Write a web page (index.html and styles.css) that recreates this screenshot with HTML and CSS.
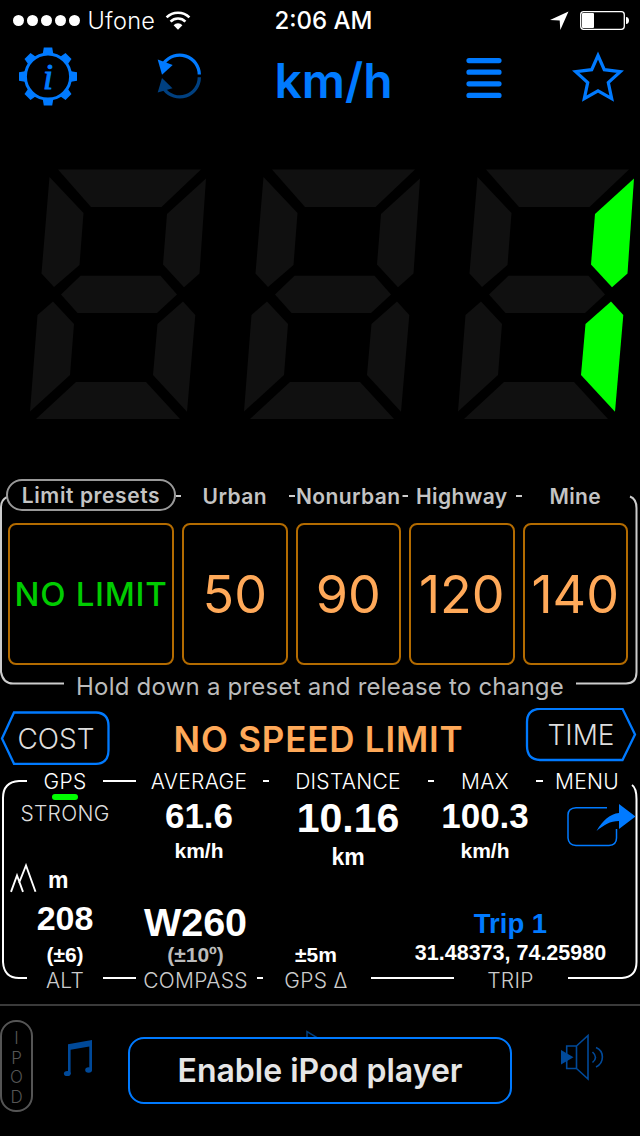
FILE: index.html
```
<!DOCTYPE html>
<html lang="en">
<head>
  <meta charset="UTF-8">
  <meta name="viewport" content="width=device-width, initial-scale=1.0">
  <title>Speedometer</title>
  <link rel="stylesheet" href="styles.css">
</head>
<body>
  <div class="status-bar">
    <div class="carrier">
      <span class="dot"></span><span class="dot"></span><span class="dot"></span><span class="dot"></span><span class="dot"></span>
      <span class="carrier-name">Ufone</span>
      <svg class="wifi" width="26" height="20" viewBox="0 0 26 20">
        <path d="M1.600 6.400a16.200 16.200 0 0 1 22.800 0M5.600 10.600a10.400 10.400 0 0 1 14.800 0" fill="none" stroke="#fff" stroke-width="2.600"/>
        <path d="M8.600 14.200a6.200 6.200 0 0 1 8.800 0L13 18.800z" fill="#fff"/>
      </svg>
    </div>
    <div class="clock">2:06 AM</div>
    <div class="status-right">
      <svg width="20" height="20" viewBox="549 11 20 20"><path d="M568.500 11.500L550 20l9.700.600.600 9.400z" fill="#fff"/></svg>
      <svg width="50" height="20" viewBox="580 11 50 20">
        <rect x="580.700" y="11.700" width="43.600" height="17.600" rx="3" fill="none" stroke="#fff" stroke-width="1.300"/>
        <rect x="582" y="13" width="12" height="15" rx="1" fill="#fff"/>
        <path d="M626 17c4 0 4 7 0 7z" fill="#fff"/>
      </svg>
    </div>
  </div>

  <div class="toolbar">
    <svg width="60" height="79" viewBox="-30 -35.500 60 79">
      <circle r="22.600" fill="none" stroke="#007aff" stroke-width="3"/>
      <g id="teeth" fill="#007aff">
        <path d="M-4.200-29h8.400l1 6h-10.400z"/>
        <path d="M-4.200-29h8.400l1 6h-10.400z" transform="rotate(45)"/>
        <path d="M-4.200-29h8.400l1 6h-10.400z" transform="rotate(90)"/>
        <path d="M-4.200-29h8.400l1 6h-10.400z" transform="rotate(135)"/>
        <path d="M-4.200-29h8.400l1 6h-10.400z" transform="rotate(180)"/>
        <path d="M-4.200-29h8.400l1 6h-10.400z" transform="rotate(225)"/>
        <path d="M-4.200-29h8.400l1 6h-10.400z" transform="rotate(270)"/>
        <path d="M-4.200-29h8.400l1 6h-10.400z" transform="rotate(315)"/>
      </g>
      <text class="info-i" x="0" y="12.500">i</text>
    </svg>
    <svg width="48" height="79" viewBox="155 41 48 79">
      <path d="M164 63a19.600 19.600 0 0 1 35.300 11.500" fill="none" stroke="#007aff" stroke-width="3.300"/>
      <path d="M157.700 59.500l15 5.500L162 74.800z" fill="#007aff"/>
      <path d="M164 89a19.600 19.600 0 0 0 35.300-11.800" fill="none" stroke="#004080" stroke-width="3.300"/>
      <path d="M162 78l10.500 10.300L157.700 92.500z" fill="#004080"/>
    </svg>
    <div class="unit">km/h</div>
    <svg width="36" height="79" viewBox="466 41 36 79">
      <path d="M469 60.600h30M469 72.200h30M469 83.800h30M469 95.400h30" stroke="#007aff" stroke-width="5.200" stroke-linecap="round"/>
    </svg>
    <svg width="56" height="79" viewBox="570 41 56 79">
      <path d="M598 55.500l6.300 14.200 16 2-12 10.800 3.400 16.200-13.700-7.800-13.700 7.800 3.400-16.200-12-10.800 16-2z" fill="none" stroke="#007aff" stroke-width="3.200"/>
    </svg>
  </div>

  <svg class="display" width="640" height="359" viewBox="0 120 640 359">
    <defs>
      <g id="digit">
        <path d="M58 169.500H201L161.500 207H91z"/>
        <path d="M49.500 177L83.500 213 79.500 265 54 287 41.500 273.500z"/>
        <path d="M61 294.500L80.500 275.700H160.500L177 294.500 157 313H77.500z"/>
        <path d="M53 301.500L74 324 70 375 30 411.500 37.500 315z"/>
        <path d="M36 419L76 382H146L180 419z"/>
      </g>
      <g id="one">
        <path d="M206 178.500L199.500 273.500 184 287.200 163 264.500 167 214z"/>
        <path d="M183 301.500L195.300 315 187 411.800 153 375 157.500 324z"/>
      </g>
    </defs>
    <g fill="#101010">
      <use href="#digit"/><use href="#one"/>
      <use href="#digit" x="214"/><use href="#one" x="214"/>
      <use href="#digit" x="428"/>
    </g>
    <use href="#one" x="428" fill="#00ff00"/>
  </svg>

  <div class="presets stack">
    <svg width="640" height="229" viewBox="0 479 640 229">
      <path d="M7 497Q1 500 1 507V672Q3 683.500 13 683.500H64M576 683.500H626Q636.500 683.500 636.500 672V508Q636.500 499 630 496.500" fill="none" stroke="#ccc" stroke-width="2"/>
      <path d="M176 496h5M289 496h6M402.500 496h5.500M516 496h6" stroke="#ccc" stroke-width="2"/>
    </svg>
    <div class="presets-body">
      <div class="preset-grid preset-names">
        <span class="pill">Limit presets</span>
        <span>Urban</span>
        <span>Nonurban</span>
        <span>Highway</span>
        <span>Mine</span>
      </div>
      <div class="preset-grid preset-buttons">
        <button class="preset none">NO LIMIT</button>
        <button class="preset">50</button>
        <button class="preset">90</button>
        <button class="preset">120</button>
        <button class="preset">140</button>
      </div>
      <div class="hint">Hold down a preset and release to change</div>
    </div>
  </div>

  <div class="limit-row">
    <div class="tag stack">
      <svg width="112" height="61" viewBox="0 708 112 61"><path d="M14 712.500H96Q108.500 713 108.500 726V750Q108.500 763.500 96 763.800H14L2 738.500z" fill="none" stroke="#007aff" stroke-width="2.300"/></svg>
      <span class="cost">COST</span>
    </div>
    <div class="limit-text">NO SPEED LIMIT</div>
    <div class="tag stack">
      <svg width="112" height="61" viewBox="525 708 112 61"><path d="M622.500 708.800H540Q527 709.500 527 722V746Q527 759.500 540 760H622.500L635 734.500z" fill="none" stroke="#007aff" stroke-width="2.300"/></svg>
      <span class="time">TIME</span>
    </div>
  </div>

  <div class="data stack">
    <svg width="640" height="235" viewBox="0 769 640 235">
      <path d="M27 781H19Q3 782 3 798V962Q4 978 19 978H27M568 978H622Q636.500 977 636.500 962V799Q636.500 788 632 785" fill="none" stroke="#fff" stroke-width="2"/>
      <path d="M103 781h33M263 781h6M428 781h6M536 781h7M103 978h33M257 978h6M371 978h83" stroke="#fff" stroke-width="2"/>
    </svg>
    <div class="data-body">
      <div class="data-top">
        <div class="col">
          <span class="label gps">GPS</span>
          <span class="signal"></span>
          <span class="label strong">STRONG</span>
        </div>
        <div class="col">
          <span class="label average">AVERAGE</span>
          <span class="value">61.6</span>
          <span class="small">km/h</span>
        </div>
        <div class="col">
          <span class="label distance">DISTANCE</span>
          <span class="value big">10.16</span>
          <span class="small km">km</span>
        </div>
        <div class="col">
          <span class="label max">MAX</span>
          <span class="value">100.3</span>
          <span class="small">km/h</span>
        </div>
        <div class="col menu">
          <span class="label menu-label">MENU</span>
          <svg width="70" height="46" viewBox="566 802 70 46">
            <path d="M607 807.700H576Q568 808 568 815V838Q568.500 845 576 845.500H609Q616.500 845 616.500 838V829" fill="none" stroke="#007aff" stroke-width="1.500"/>
            <path d="M596.500 831C603 820 610 814 619 813V804L635.500 816.500 619 829V821C610 821 604 825 596.500 831z" fill="#007aff"/>
          </svg>
        </div>
      </div>
      <div class="data-bottom">
        <div class="col">
          <span class="altitude">
            <svg width="28" height="30" viewBox="10 863 28 30"><path d="M11 891.800L17 875.500 23 891.800M19 883L26 865.500 35.500 891.800" fill="none" stroke="#fff" stroke-width="1.900"/></svg>
            <b>m</b>
          </span>
          <span class="value alt">208</span>
          <span class="small note">(±6)</span>
          <span class="label dim">ALT</span>
        </div>
        <div class="col">
          <span class="value compass">W260</span>
          <span class="small grey">(±10º)</span>
          <span class="label dim compass-label">COMPASS</span>
        </div>
        <div class="col accuracy">
          <span class="small note">±5m</span>
          <span class="label dim">GPS Δ</span>
        </div>
        <div class="col trip">
          <span class="trip-name">Trip 1</span>
          <span class="coords">31.48373, 74.25980</span>
          <span class="label dim">TRIP</span>
        </div>
      </div>
    </div>
  </div>

  <div class="player">
    <div class="ipod"><span>I</span><span>P</span><span>O</span><span>D</span></div>
    <svg class="music" width="30" height="40" viewBox="63 1038 30 40">
      <path d="M68 1044.300L92 1040V1070.500H89.300V1046.500L70.600 1049.700V1074H68z" fill="#004999"/>
      <ellipse cx="67.300" cy="1073.500" rx="3.400" ry="2.600" fill="#004999"/>
      <ellipse cx="88.600" cy="1070" rx="3.400" ry="2.800" fill="#004999"/>
    </svg>
    <svg class="play" width="30" height="40" viewBox="305 1028 30 40"><path d="M307 1031.500V1062L331 1046z" fill="none" stroke="#004080" stroke-width="1.500"/></svg>
    <svg class="volume" width="46" height="48" viewBox="560 1033 46 48">
      <path d="M576.500 1046H566.700V1068.500H576.500zM576.500 1046L588 1035.500V1079L576.500 1068.500M592.500 1052Q598.500 1057.500 592.500 1062.500M596 1047.500C604.500 1051 604.500 1063 596 1067" fill="none" stroke="#004999" stroke-width="1.600"/>
      <path d="M561 1050L573.500 1057.300 561 1064.500z" fill="#004999"/>
    </svg>
    <button class="enable">Enable iPod player</button>
  </div>
</body>
</html>
```
FILE: styles.css
```
* {
  box-sizing: border-box;
}
body {
  margin: 0;
  width: 640px;
  height: 1136px;
  overflow: hidden;
  background-color: #000;
  color: #fff;
  font-family: Inter, "Liberation Sans", sans-serif;
}
svg {
  display: block;
}
button {
  background-color: #000;
  font-family: inherit;
  padding: 0;
  cursor: pointer;
}
/* frame drawing and content share one cell */
.stack {
  display: grid;
}
.stack > * {
  grid-area: 1 / 1;
}

/* status bar */
.status-bar {
  display: grid;
  grid-template-columns: 272px 103px 1fr;
  align-items: center;
  height: 41px;
  font-size: 24px;
  line-height: 41px;
}
.carrier {
  display: flex;
  align-items: center;
  gap: 2.4px;
  padding-left: 12.6px;
}
.dot {
  width: 11.6px;
  height: 11.6px;
  border-radius: 50%;
  background-color: #fff;
}
.carrier-name {
  margin-left: 5px;
  width: 75px;
  font-size: 23.5px;
  font-weight: 300;
  letter-spacing: 0.3px;
}
.clock {
  text-align: center;
  font-weight: 500;
  white-space: nowrap;
}
.status-right {
  display: flex;
  justify-content: flex-end;
  gap: 11px;
  padding-right: 10px;
}

/* toolbar */
.toolbar {
  display: grid;
  grid-template-columns: 96px 166px 143px 158px 70px;
  justify-items: center;
  height: 79px;
}
.info-i {
  font: italic 36px "Liberation Serif", serif;
  fill: #007aff;
  stroke: #007aff;
  stroke-width: 1px;
  text-anchor: middle;
}
.unit {
  color: #007aff;
  font-size: 48px;
  font-weight: 600;
  line-height: 79px;
}

/* presets */
.presets {
  height: 229px;
}
.preset-grid {
  display: grid;
  grid-template-columns: 166px repeat(4, 1fr);
  gap: 8px;
  padding: 0 12px 0 8px;
}
.preset-names {
  height: 44px;
  color: #c4c4c4;
  font-size: 21px;
  font-weight: 600;
  line-height: 35px;
  letter-spacing: 0.4px;
  text-align: center;
}
.pill {
  width: 170px;
  height: 32px;
  margin-left: -2px;
  border: 2px solid #999;
  border-radius: 16px;
  background-color: #000;
  line-height: 29px;
  letter-spacing: 0.6px;
}
.preset {
  height: 142px;
  border: 2px solid #b36b00;
  border-radius: 8px;
  color: #ffa959;
  font-size: 52px;
  font-weight: 400;
}
.preset.none {
  color: #00cc00;
  font-size: 33px;
  font-weight: 500;
  letter-spacing: 0.7px;
}
.hint {
  color: #bbb;
  font-size: 24px;
  font-weight: 400;
  line-height: 43px;
  text-align: center;
  letter-spacing: 0.22px;
}

/* current limit */
.limit-row {
  display: flex;
  justify-content: space-between;
  height: 61px;
  padding-right: 3px;
}
.tag span {
  color: #ddd;
  font-size: 28px;
  font-weight: 300;
  text-align: center;
}
.tag .cost {
  line-height: 63px;
}
.tag .time {
  line-height: 55px;
}
.limit-text {
  color: #ffa959;
  font-size: 35px;
  font-weight: 600;
  line-height: 63px;
  letter-spacing: 0.8px;
}

/* trip data */
.data {
  height: 235px;
}
.data-top {
  display: grid;
  grid-template-columns: 130px 138px 160px 114px 90px;
  height: 93px;
}
.data-bottom {
  display: grid;
  grid-template-columns: 130px 131px 110px 1fr;
  height: 142px;
}
.col {
  display: flex;
  flex-direction: column;
  align-items: center;
  white-space: nowrap;
}
.label {
  font-size: 21px;
  font-weight: 300;
  line-height: 25px;
  letter-spacing: 0.3px;
}
.label.dim {
  color: #ccc;
}
.signal {
  width: 26px;
  height: 6px;
  border-radius: 3px;
  background-color: #00ff00;
}
.strong {
  margin-top: 1px;
  color: #ddd;
}
.value {
  font-family: "Liberation Sans", sans-serif;
  font-size: 35px;
  font-weight: bold;
  line-height: 44px;
}
.value.big {
  font-size: 41px;
  line-height: 48px;
}
.small {
  font-family: "Liberation Sans", sans-serif;
  font-size: 21px;
  font-weight: bold;
  line-height: 26px;
}
.small.km {
  font-size: 23px;
  line-height: 30px;
}
.menu svg {
  margin: 8px 0 0 27px;
}
.altitude {
  display: flex;
  align-self: flex-start;
  gap: 10px;
  height: 34px;
  padding: 1px 0 0 10px;
}
.altitude b {
  font-family: "Liberation Sans", sans-serif;
  font-size: 23px;
  line-height: 34px;
}
.value.alt {
  font-size: 34px;
}
.note {
  margin-top: 2px;
}
.grey {
  color: #bbb;
}
.value.compass {
  margin-top: 40px;
  font-size: 39.5px;
  line-height: 40px;
}
.accuracy {
  padding-top: 78px;
}
.trip {
  padding: 45px 0 0 10px;
}
.trip-name {
  color: #007aff;
  font-family: "Liberation Sans", sans-serif;
  font-size: 27.5px;
  font-weight: bold;
  line-height: 34px;
}
.coords {
  font-family: "Liberation Sans", sans-serif;
  font-size: 21.5px;
  font-weight: bold;
  line-height: 24px;
  margin-bottom: 3px;
}

/* player */
.player {
  position: relative;
  display: flex;
  height: 132px;
  border-top: 2px solid #3a3a3a;
}
.ipod {
  display: flex;
  flex-direction: column;
  align-items: center;
  width: 33px;
  height: 92px;
  margin-top: 14px;
  padding-top: 7px;
  border: 2px solid #555;
  border-radius: 16px;
  color: #555;
  font-size: 17px;
  font-weight: 300;
  line-height: 19.5px;
}
.music {
  margin: 32px 0 0 30px;
}
.play {
  margin: 22px 0 0 212px;
}
.volume {
  margin: 27px 0 0 225px;
}
.enable {
  position: absolute;
  left: 128px;
  top: 31px;
  width: 384px;
  height: 67px;
  border: 2px solid #007aff;
  border-radius: 16px;
  color: #e6e6e6;
  font-size: 32px;
  font-weight: 600;
}
```
